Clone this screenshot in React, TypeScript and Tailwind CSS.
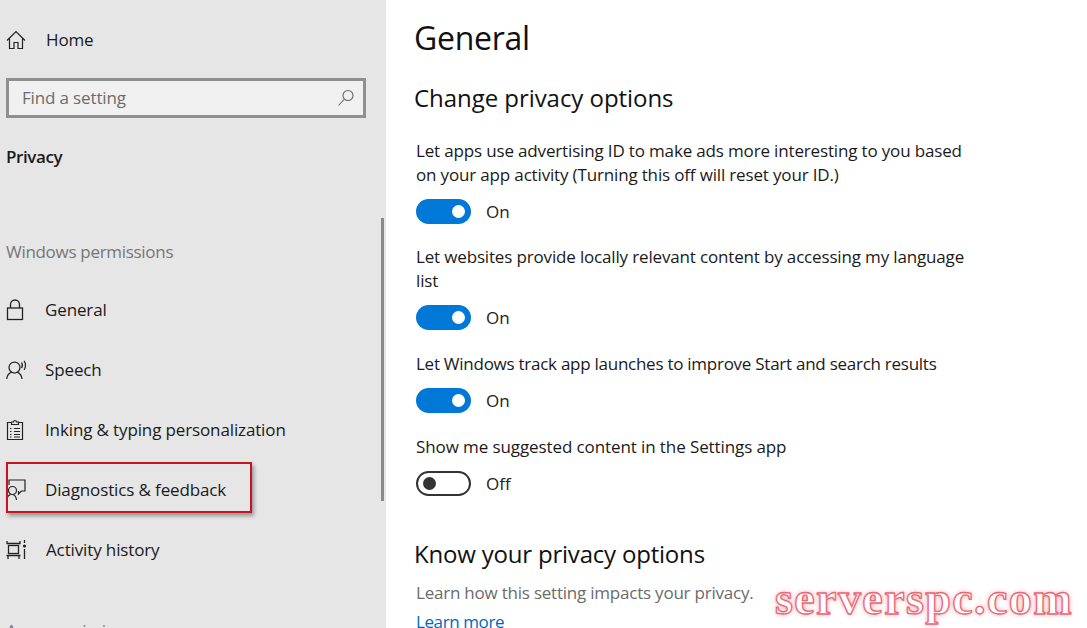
const sans = "font-['Open_Sans','Liberation_Sans',sans-serif]";

function HomeIcon() {
  return (
    <svg width="20" height="20" viewBox="0 0 20 20" fill="none" stroke="#222" strokeWidth="1.2">
      <path d="M1 10.5 10 1.5l9 9" />
      <path d="M3.5 8.5V18.5H8V12.5h4V18.5h4.5V8.5" />
    </svg>
  );
}
function SearchIcon() {
  return (
    <svg width="18" height="18" viewBox="0 0 18 18" fill="none" stroke="#666" strokeWidth="1.1">
      <circle cx="11" cy="6.5" r="5" />
      <path d="M7.5 10 1.5 16.5" />
    </svg>
  );
}
function LockIcon() {
  return (
    <svg width="18" height="22" viewBox="0 0 18 22" fill="none" stroke="#222" strokeWidth="1.3">
      <rect x="1.5" y="9" width="15" height="11.5" />
      <path d="M4.5 9V5.5a4.5 4.5 0 0 1 9 0V9" />
    </svg>
  );
}
function SpeechIcon() {
  return (
    <svg width="21" height="20" viewBox="0 0 21 20" fill="none" stroke="#222" strokeWidth="1.25">
      <circle cx="8.5" cy="7.5" r="5.5" />
      <path d="M0.700 19c.4-3.800 2.600-6 5.300-6.800M16 19c-.4-3.800-2.600-6-5.300-6.800" />
      <path d="M15.500 2.500c1 1.500 1 4 0 5.500M18 0.800c2 2.400 2 6.600 0 9" />
    </svg>
  );
}
function ClipboardIcon() {
  return (
    <svg width="18" height="22" viewBox="0 0 18 22" fill="none" stroke="#222" strokeWidth="1.2">
      <path d="M5 3.500H1.500V20.500H16.500V3.500H13" />
      <path d="M5.500 5.500V3H7.500a1.500 1.500 0 0 1 3 0H12.500V5.500Z" />
      <path d="M4 9.500h1.500M8 9.500h6M4 12.500h1.500M8 12.500h6M4 15.500h1.500M8 15.500h6M4 18h1.500M8 18h6" />
    </svg>
  );
}
function FeedbackIcon() {
  return (
    <svg width="20" height="22" viewBox="0 0 20 22" fill="none" stroke="#222" strokeWidth="1.2">
      <path d="M3 6V1h16v11h-3.500l-3 3v-3" />
      <circle cx="6.500" cy="11.500" r="4" />
      <path d="M1 20c.3-2.500 2-4 3.500-4.500M10.500 21c-.3-3-1.800-4.800-3.500-5.500" />
    </svg>
  );
}
function ActivityIcon() {
  return (
    <svg width="21" height="20" viewBox="0 0 21 20" fill="none" stroke="#222" strokeWidth="1.3">
      <path d="M1 1v2.500h13V1" />
      <rect x="2.500" y="5.500" width="10" height="8" />
      <path d="M0.500 15.500h14M2 15.500V19M13 15.500V19" />
      <circle cx="18.500" cy="6" r="1.600" fill="#222" stroke="none" />
      <path d="M18.500 0v3M18.500 9v10" />
    </svg>
  );
}

function NavRow({ icon, label, labelClass = "" }: { icon: React.ReactNode; label: string; labelClass?: string }) {
  return (
    <div className="relative flex h-[60px] items-center">
      <div className="flex w-[45px] shrink-0 items-center pl-[6px]">{icon}</div>
      <span className={`text-[17px] tracking-[-0.13px] text-[#1a1a1a] ${labelClass}`}>{label}</span>
    </div>
  );
}

function Toggle({ on }: { on: boolean }) {
  return (
    <div className="flex items-center">
      {on ? (
        <div className="flex h-[25px] w-[55px] items-center justify-end rounded-full bg-[#0078d7] pr-[6px]">
          <div className="h-[13px] w-[13px] rounded-full bg-white" />
        </div>
      ) : (
        <div className="flex h-[25px] w-[55px] items-center rounded-full border-2 border-[#333] bg-white pl-[5px]">
          <div className="h-[13px] w-[13px] rounded-full bg-[#333]" />
        </div>
      )}
      <span className="ml-[15px] text-[17px] text-[#222]">{on ? "On" : "Off"}</span>
    </div>
  );
}

function Setting({ lines, on, mt, track }: { lines: string[]; on: boolean; mt: string; track: string }) {
  return (
    <div className={mt}>
      <div className={`text-[17px] leading-[24px] text-[#1a1a1a] ${track}`}>
        {lines.map((l) => (
          <div key={l}>{l}</div>
        ))}
      </div>
      <div className="mt-[12px]">
        <Toggle on={on} />
      </div>
    </div>
  );
}

export default function App() {
  return (
    <div className={`relative flex h-[628px] w-[1087px] overflow-hidden bg-white ${sans}`}>
      <aside className="relative h-full w-[386px] shrink-0 overflow-hidden bg-[#e6e6e6]">
        <div className="absolute left-[381px] top-[218px] h-[283px] w-[3px] bg-[#8a8a8a]" />
        <div className="flex h-[80px] items-center">
          <div className="w-full">
            <NavRow icon={<HomeIcon />} label="Home" labelClass="ml-[1px]" />
          </div>
        </div>
        <div className="ml-[6px] -mt-[2px] flex h-[40px] w-[360px] items-center justify-between border-[3px] border-[#8f8f8f] bg-[#f0f0f0] pl-[13px] pr-[8px]">
          <span className="text-[17px] tracking-[-0.15px] text-[#6b6b6b]">Find a setting</span>
          <SearchIcon />
        </div>
        <div className="ml-[6px] mt-[27px] text-[17px] font-semibold leading-[24px] tracking-[-0.4px] text-[#1a1a1a]">Privacy</div>
        <div className="ml-[6px] mt-[71px] text-[17px] leading-[24px] tracking-[-0.3px] text-[#767676]">Windows permissions</div>
        <div className="mt-[16px]">
          <NavRow icon={<LockIcon />} label="General" labelClass="tracking-[-0.3px]" />
          <NavRow icon={<SpeechIcon />} label="Speech" />
          <NavRow icon={<ClipboardIcon />} label="Inking & typing personalization" />
          <div className="relative">
            <NavRow icon={<FeedbackIcon />} label="Diagnostics & feedback" />
            <div className="absolute left-[6px] top-[2px] h-[51px] w-[246px] border-[2px] border-[#c8141e] shadow-[2px_3px_4px_rgba(0,0,0,0.35)]" />
          </div>
          <NavRow icon={<ActivityIcon />} label="Activity history" labelClass="ml-[1px]" />
        </div>
        <div className="ml-[6px] mt-[39px] text-[17px] leading-[24px] tracking-[-0.3px] text-[#767676]">App permissions</div>
      </aside>
      <main className="relative min-w-0 flex-1 pl-[28px]">
        <h1 className="mt-[15px] text-[32px] font-normal leading-[46px] tracking-[-0.3px] text-[#111]">General</h1>
        <h2 className="mt-[21px] text-[24px] font-normal leading-[32px] tracking-[-0.05px] text-[#111]">Change privacy options</h2>
        <div className="ml-[2px]">
          <Setting
            mt="mt-[25px]"
            on
            track="tracking-[-0.16px]"
            lines={["Let apps use advertising ID to make ads more interesting to you based", "on your app activity (Turning this off will reset your ID.)"]}
          />
          <Setting
            mt="mt-[20px]"
            on
            track="tracking-[-0.16px]"
            lines={["Let websites provide locally relevant content by accessing my language", "list"]}
          />
          <Setting
            mt="mt-[22px]"
            on
            track="tracking-[-0.26px]"
            lines={["Let Windows track app launches to improve Start and search results"]}
          />
          <Setting
            mt="mt-[21px]"
            on={false}
            track="tracking-[-0.1px]"
            lines={["Show me suggested content in the Settings app"]}
          />
        </div>
        <h2 className="mt-[42px] text-[24px] font-normal leading-[32px] tracking-[-0.2px] text-[#111]">Know your privacy options</h2>
        <div className="ml-[2px] mt-[11px] text-[17px] leading-[24px] tracking-[-0.22px] text-[#6b6b6b]">Learn how this setting impacts your privacy.</div>
        <div className="ml-[2px] mt-[5px] text-[17px] leading-[24px] tracking-[-0.4px] text-[#0067b8]">Learn more</div>
        <div className="absolute left-[389px] top-[572px] font-['Liberation_Serif',serif] text-[46px] font-bold leading-[54px] tracking-[1.4px] text-white [-webkit-text-stroke:1.3px_#ea6673] [text-shadow:0_0_5px_#f28a95]">
          serverspc.com
        </div>
      </main>
    </div>
  );
}
